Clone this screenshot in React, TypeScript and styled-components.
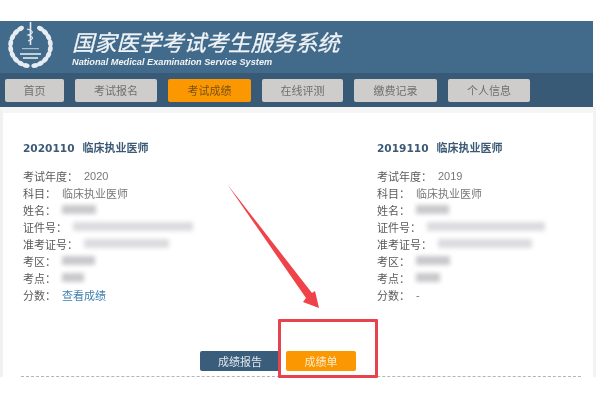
import React from "react";
import styled, { createGlobalStyle } from "styled-components";

const GlobalStyle = createGlobalStyle`
  html, body {
    margin: 0;
    padding: 0;
    background: #ffffff;
    font-family: "Liberation Sans", "Noto Sans CJK SC", sans-serif;
  }
`;

const Page = styled.div`
  position: relative;
  width: 600px;
  height: 400px;
  padding-top: 21px;
  box-sizing: border-box;
  overflow: hidden;
  filter: blur(0.5px);
`;

const Shell = styled.div`
  width: 593px;
`;

const Banner = styled.div`
  height: 52px;
  background: #426a8b;
  display: flex;
  align-items: flex-start;
  padding-left: 7px;
  box-sizing: border-box;
`;

const Logo = styled.svg`
  width: 50px;
  height: 50px;
  flex: none;
`;

const TitleBlock = styled.div`
  margin-left: 15px;
  padding-top: 10px;
  color: #f0f4f7;
  font-style: italic;
`;

const Title = styled.div`
  font-size: 22.3px;
  line-height: 26px;
  white-space: nowrap;
  -webkit-text-stroke: 0.3px #f0f4f7;
`;

const Subtitle = styled.div`
  font-size: 9.2px;
  line-height: 10px;
  font-weight: bold;
  white-space: nowrap;
`;

const Nav = styled.div`
  height: 34px;
  background: #395a76;
  display: flex;
  align-items: center;
  gap: 11px;
  padding-left: 5px;
  box-sizing: border-box;
`;

const NavButton = styled.div<{ $width: number; $active?: boolean }>`
  width: ${(p) => p.$width}px;
  height: 23px;
  border-radius: 2px;
  background: ${(p) => (p.$active ? "#fb9700" : "#cfcdcb")};
  color: ${(p) => (p.$active ? "#7a5312" : "#6f6f6f")};
  font-size: 11px;
  display: flex;
  align-items: center;
  justify-content: center;
`;

const Panel = styled.div`
  height: 270px;
  border-left: 3px solid #f1f1f1;
  border-right: 3px solid #f3f3f3;
  border-top: 6px solid #f5f5f5;
  box-sizing: border-box;
  display: flex;
  flex-direction: column;
  margin-right: -3px;
`;

const Records = styled.div`
  display: flex;
  padding: 27px 0 0 20px;
`;

const Record = styled.div`
  width: 354px;
  &:last-child {
    width: 200px;
  }
`;

const RecordTitle = styled.div`
  display: flex;
  gap: 8px;
  color: #3c5a75;
  font-size: 11px;
  line-height: 16px;
  font-weight: bold;
  margin-bottom: 11px;
`;

const RecordCode = styled.span`
  font-family: "DejaVu Sans", sans-serif;
  font-size: 10.6px;
`;

const Row = styled.div`
  display: flex;
  align-items: center;
  height: 17px;
  font-size: 11px;
  white-space: nowrap;
`;

const Label = styled.span`
  color: #5a5a5a;
  margin-right: 6px;
`;

const Value = styled.span`
  color: #777777;
`;

const ScoreLink = styled.span`
  color: #3f7fae;
`;

const Redacted = styled.span<{ $width: number; $tone?: string }>`
  display: inline-block;
  width: ${(p) => p.$width}px;
  height: 9px;
  background: ${(p) => p.$tone || "#c9c9cc"};
  filter: blur(2px);
`;

const Actions = styled.div`
  margin-top: auto;
  display: flex;
  gap: 6px;
  padding: 0 0 5px 197px;
`;

const ActionButton = styled.div<{ $width: number; $primary?: boolean }>`
  width: ${(p) => p.$width}px;
  height: 20px;
  border-radius: 2px;
  background: ${(p) => (p.$primary ? "#fb9700" : "#3a5d7c")};
  color: ${(p) => (p.$primary ? "#fdeccd" : "#dfe6ec")};
  font-size: 11px;
  display: flex;
  align-items: center;
  justify-content: center;
`;

const Divider = styled.div`
  margin: 0 12px 0 18px;
  border-top: 1px dashed #b5b5b5;
`;

const Callout = styled.div`
  position: absolute;
  left: 278px;
  top: 319px;
  width: 100px;
  height: 59px;
  box-sizing: border-box;
  border: 3px solid #e5434e;
  border-radius: 1px;
`;

const Arrow = styled.svg`
  position: absolute;
  left: 220px;
  top: 175px;
  width: 110px;
  height: 145px;
`;

const nav = [
  { label: "首页", width: 59 },
  { label: "考试报名", width: 82 },
  { label: "考试成绩", width: 83, active: true },
  { label: "在线评测", width: 81 },
  { label: "缴费记录", width: 83 },
  { label: "个人信息", width: 82 },
];

const records = [
  { code: "2020110", year: "2020", name: 34, id: 120, ticket: 85, area: 33, site: 22, link: true },
  { code: "2019110", year: "2019", name: 33, id: 118, ticket: 94, area: 34, site: 24, link: false },
];

const Wreath = () => {
  const leaves = [0, 1, 2, 3, 4, 5, 6, 7, 8];
  return (
    <Logo viewBox="0 0 50 50">
      {[1, -1].map((side) => (
        <g key={side} transform={side === -1 ? "translate(47 0) scale(-1 1)" : undefined}>
          {leaves.map((i) => {
            const t = -1.05 + (i / 8) * 2.4;
            const x = 23.5 - 20 * Math.cos(t);
            const y = 25 + 20 * Math.sin(t);
            const deg = (t * 180) / Math.PI;
            return (
              <ellipse
                key={i}
                cx={x}
                cy={y}
                rx="2.4"
                ry="3.6"
                fill="#e6ecf1"
                transform={`rotate(${-deg} ${x} ${y})`}
              />
            );
          })}
        </g>
      ))}
      <path d="M23.5 1 V24" stroke="#e6ecf1" strokeWidth="1.6" />
      <path d="M20 8 C27 10 27 12 21 14 C27 16 27 18 21 20" stroke="#e6ecf1" strokeWidth="1.1" fill="none" />
      <rect x="15" y="27" width="17" height="1.2" fill="#a9bccb" />
      <rect x="13" y="32" width="21" height="2" fill="#c3d0da" />
      <rect x="16" y="36" width="15" height="2" fill="#c3d0da" />
    </Logo>
  );
};

export default function App() {
  return (
    <Page>
      <GlobalStyle />
      <Shell>
        <Banner>
          <Wreath />
          <TitleBlock>
            <Title>国家医学考试考生服务系统</Title>
            <Subtitle>National Medical Examination Service System</Subtitle>
          </TitleBlock>
        </Banner>
        <Nav>
          {nav.map((item) => (
            <NavButton key={item.label} $width={item.width} $active={item.active}>
              {item.label}
            </NavButton>
          ))}
        </Nav>
        <Panel>
          <Records>
            {records.map((r) => (
              <Record key={r.code}>
                <RecordTitle>
                  <RecordCode>{r.code}</RecordCode>
                  <span>临床执业医师</span>
                </RecordTitle>
                <Row>
                  <Label>考试年度：</Label>
                  <Value>{r.year}</Value>
                </Row>
                <Row>
                  <Label>科目：</Label>
                  <Value>临床执业医师</Value>
                </Row>
                <Row>
                  <Label>姓名：</Label>
                  <Redacted $width={r.name} />
                </Row>
                <Row>
                  <Label>证件号：</Label>
                  <Redacted $width={r.id} $tone="#dcdce0" />
                </Row>
                <Row>
                  <Label>准考证号：</Label>
                  <Redacted $width={r.ticket} $tone="#dcdce0" />
                </Row>
                <Row>
                  <Label>考区：</Label>
                  <Redacted $width={r.area} />
                </Row>
                <Row>
                  <Label>考点：</Label>
                  <Redacted $width={r.site} />
                </Row>
                <Row>
                  <Label>分数：</Label>
                  {r.link ? <ScoreLink>查看成绩</ScoreLink> : <Value>-</Value>}
                </Row>
              </Record>
            ))}
          </Records>
          <Actions>
            <ActionButton $width={80}>成绩报告</ActionButton>
            <ActionButton $width={70} $primary>
              成绩单
            </ActionButton>
          </Actions>
          <Divider />
        </Panel>
      </Shell>
      <Arrow viewBox="0 0 110 145">
        <path d="M7 9 L92 118 L95 116 L99 133 L83 127 L86 123 Z" fill="#ef4249" />
      </Arrow>
      <Callout />
    </Page>
  );
}
